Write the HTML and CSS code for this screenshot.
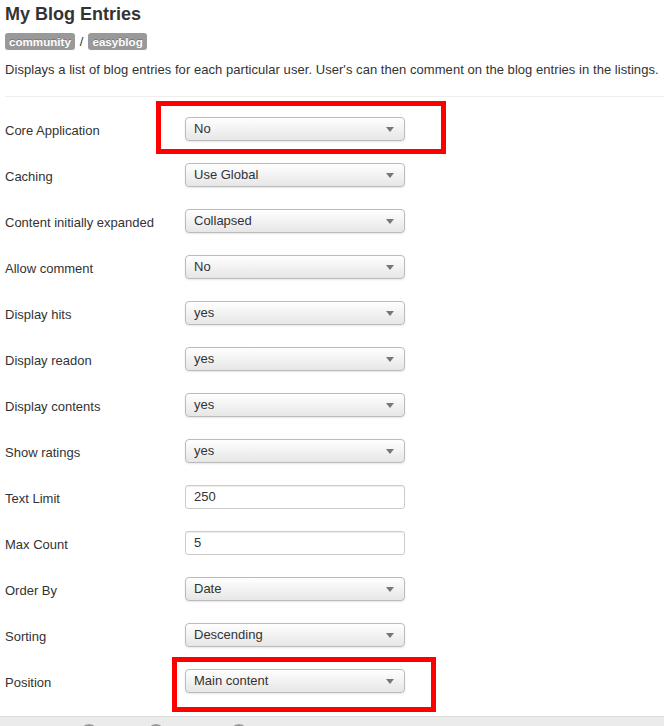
FILE: index.html
```html
<!DOCTYPE html>
<html>
<head>
<meta charset="utf-8">
<link rel="stylesheet" href="styles.css">
</head>
<body>
<div class="page">
  <h1 class="title">My Blog Entries</h1>
  <div class="tags"><span class="badge">community</span><span class="sep">/</span><span class="badge">easyblog</span></div>
  <p class="desc">Displays a list of blog entries for each particular user. User's can then comment on the blog entries in the listings.</p>
  <div class="form">
    <div class="row"><label class="lbl">Core Application</label><div class="ctl"><div class="select">No<span class="caret"></span></div><span class="mark mark1"></span></div></div>
    <div class="row"><label class="lbl">Caching</label><div class="ctl"><div class="select">Use Global<span class="caret"></span></div></div></div>
    <div class="row"><label class="lbl">Content initially expanded</label><div class="ctl"><div class="select">Collapsed<span class="caret"></span></div></div></div>
    <div class="row"><label class="lbl">Allow comment</label><div class="ctl"><div class="select">No<span class="caret"></span></div></div></div>
    <div class="row"><label class="lbl">Display hits</label><div class="ctl"><div class="select">yes<span class="caret"></span></div></div></div>
    <div class="row"><label class="lbl">Display readon</label><div class="ctl"><div class="select">yes<span class="caret"></span></div></div></div>
    <div class="row"><label class="lbl">Display contents</label><div class="ctl"><div class="select">yes<span class="caret"></span></div></div></div>
    <div class="row"><label class="lbl">Show ratings</label><div class="ctl"><div class="select">yes<span class="caret"></span></div></div></div>
    <div class="row"><label class="lbl">Text Limit</label><div class="ctl"><div class="input">250</div></div></div>
    <div class="row"><label class="lbl">Max Count</label><div class="ctl"><div class="input">5</div></div></div>
    <div class="row"><label class="lbl">Order By</label><div class="ctl"><div class="select">Date<span class="caret"></span></div></div></div>
    <div class="row"><label class="lbl">Sorting</label><div class="ctl"><div class="select">Descending<span class="caret"></span></div></div></div>
    <div class="row"><label class="lbl">Position</label><div class="ctl"><div class="select">Main content<span class="caret"></span></div><span class="mark mark2"></span></div></div>
  </div>
</div>
<div class="footer">
  <span class="dot dot1"></span><span class="dot dot2"></span><span class="dot dot3"></span>
</div>
</body>
</html>
```

FILE: styles.css
```css
html, body {
  margin: 0;
  padding: 0;
  background: #fff;
  overflow: hidden;
}
body {
  font-family: "Liberation Sans", Arial, sans-serif;
  color: #333;
  font-size: 13px;
}
.page {
  padding: 3px 0 0 5px;
}
.title {
  margin: 0;
  font-size: 18px;
  line-height: 22px;
  font-weight: bold;
  color: #333;
}
.tags {
  display: flex;
  align-items: center;
  margin-top: 7px;
  height: 18px;
}
.badge {
  display: inline-block;
  background: #999;
  color: #fff;
  font-weight: bold;
  font-size: 11.6px;
  line-height: 13px;
  padding: 2px 4px;
  border-radius: 3px;
  text-shadow: 0 -1px 0 rgba(0,0,0,0.25);
}
.sep {
  margin: 0 5px 0 5px;
  color: #333;
  font-size: 13px;
}
.desc {
  margin: 11px 0 0 0;
  line-height: 18px;
  font-size: 13px;
  letter-spacing: 0.05px;
  color: #333;
  white-space: nowrap;
}
.form {
  margin-top: 17px;
  border-top: 1px solid #eee;
  padding-top: 9px;
}
.row {
  display: flex;
  align-items: center;
  height: 46px;
}
.lbl {
  width: 180px;
  flex: none;
  line-height: 18px;
  padding-top: 4px;
}
.ctl {
  position: relative;
  width: 220px;
  height: 24px;
}
.select {
  box-sizing: border-box;
  height: 24px;
  width: 220px;
  border: 1px solid #bbb;
  border-radius: 4px;
  background: linear-gradient(#ffffff, #e6e6e6);
  box-shadow: inset 0 1px 0 rgba(255,255,255,0.3), 0 1px 2px rgba(0,0,0,0.1);
  padding: 0 8px;
  line-height: 22px;
  position: relative;
  color: #333;
}
.caret {
  position: absolute;
  right: 10px;
  top: 9px;
  width: 0;
  height: 0;
  border-left: 4px solid transparent;
  border-right: 4px solid transparent;
  border-top: 5px solid #777;
}
.input {
  box-sizing: border-box;
  height: 24px;
  width: 220px;
  border: 1px solid #ccc;
  border-radius: 3px;
  background: #fff;
  box-shadow: inset 0 1px 1px rgba(0,0,0,0.075);
  padding: 0 8px;
  line-height: 22px;
}
.mark {
  position: absolute;
  border: 5px solid #ff0000;
  pointer-events: none;
}
.mark1 {
  left: -29px;
  right: -41px;
  top: -16px;
  bottom: -13px;
}
.mark2 {
  left: -13px;
  right: -31px;
  top: -12px;
  bottom: -19px;
}
.footer {
  margin-top: 12px;
  border-top: 1px solid #ddd;
  background: #ebebeb;
  height: 40px;
  display: flex;
  align-items: flex-start;
  padding-top: 7px;
}
.dot {
  width: 18px;
  height: 18px;
  border-radius: 50%;
  background: #999;
  flex: none;
}
.dot1 { margin-left: 80px; }
.dot2 { margin-left: 49px; }
.dot3 { margin-left: 65px; }
```
